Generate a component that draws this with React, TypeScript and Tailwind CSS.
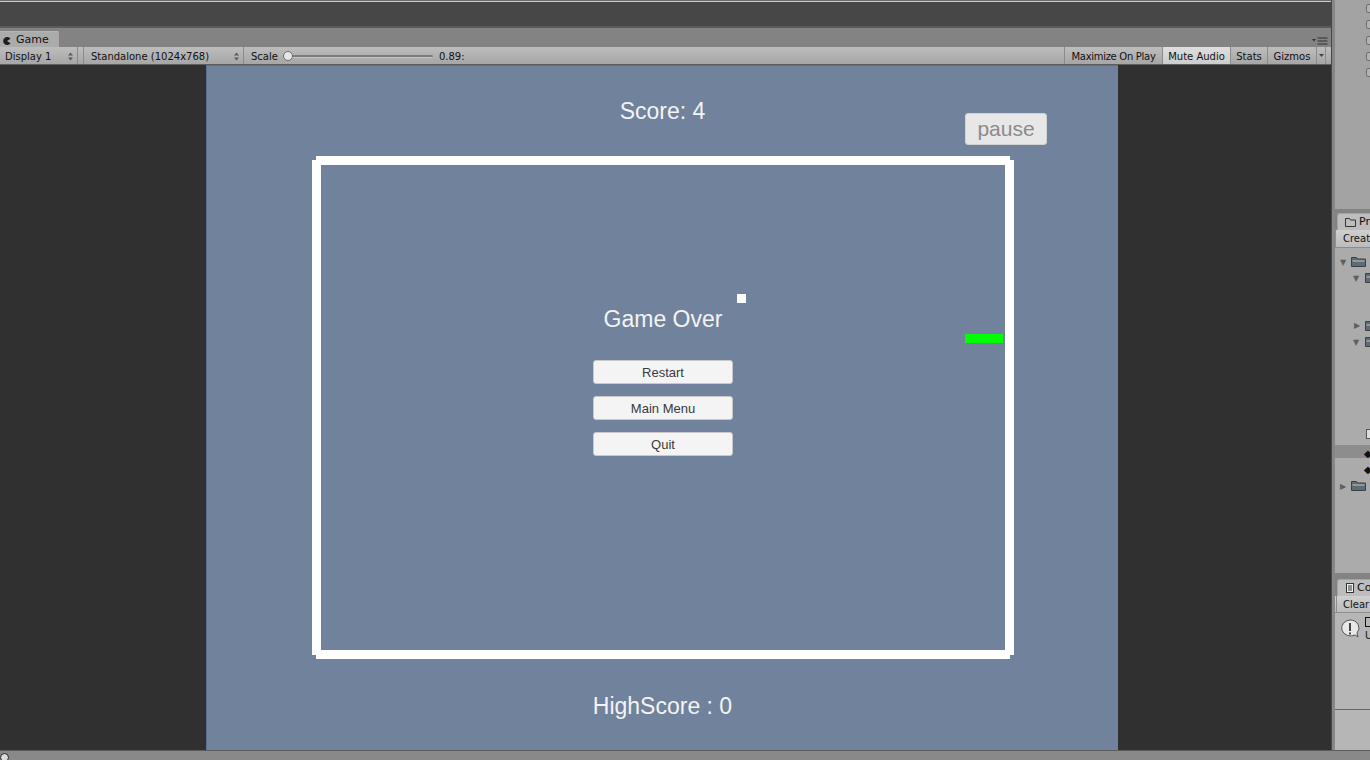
import React from 'react';

const UpDown: React.FC = () => (
  <svg width="5" height="9" viewBox="0 0 5 9" className="shrink-0">
    <path d="M0 3.5 L2.5 0.5 L5 3.5 Z M0 5.5 L2.5 8.5 L5 5.5 Z" fill="#5a5a5a" />
  </svg>
);

const Folder: React.FC<{ className?: string }> = ({ className }) => (
  <svg width="15" height="11" viewBox="0 0 15 11" className={className}>
    <path d="M0.5 1.5 h5 l1.5 1.5 h7.5 v7.5 h-14 Z" fill="#5f6b70" stroke="#3a4246" />
    <rect x="1.5" y="4" width="12" height="2" fill="#8c999e" />
  </svg>
);

const MenuButton: React.FC<{ label: string }> = ({ label }) => (
  <button className="w-[140px] h-[24px] bg-[#f4f4f4] border border-[#c9c9c9] rounded-[3px] text-[13px] leading-none text-[#3a3a3a] font-['Liberation_Sans',sans-serif]">
    {label}
  </button>
);

const ToolbarItem: React.FC<{ width: string; children: React.ReactNode; active?: boolean }> = ({ width, children, active }) => (
  <div
    className={`${width} h-full flex items-center justify-center whitespace-nowrap border-l border-[#8b8b8b] pt-[1px] ${
      active ? 'bg-gradient-to-b from-[#dedede] to-[#cdcdcd]' : ''
    }`}
  >
    {children}
  </div>
);

const GameView: React.FC = () => (
  <div className="relative w-[912px] h-full ml-[206px] bg-[#71829d] border-t border-l border-[#5c6f90] flex flex-col font-['Liberation_Sans',sans-serif] text-[#f3f3f3]">
    <div className="mt-[32px] text-center text-[23px] leading-[26px]">Score: 4</div>

    <button className="absolute left-[758px] top-[47px] w-[82px] h-[32px] bg-[#e7e7e7] border border-[#d2d2d2] rounded-[3px] text-[21px] leading-none text-[#8b8b8b] pb-[2px]">
      pause
    </button>

    <div className="relative mt-[32px] ml-[105px] w-[702px] h-[503px]">
      {/* walls */}
      <div className="absolute inset-y-0 left-[4px] right-[4px] border-y-[9px] border-white" />
      <div className="absolute inset-x-0 top-[4px] bottom-[4px] border-x-[9px] border-white" />

      {/* food and snake */}
      <div className="absolute left-[425px] top-[138px] w-[9px] h-[9px] bg-white" />
      <div className="absolute left-[653px] top-[178px] w-[38px] h-[9px] bg-[#00ff00]" />

      <div className="relative flex flex-col items-center pt-[150px]">
        <div className="text-[23px] leading-[26px]">Game Over</div>
        <div className="mt-[28px] flex flex-col gap-[12px]">
          <MenuButton label="Restart" />
          <MenuButton label="Main Menu" />
          <MenuButton label="Quit" />
        </div>
      </div>
    </div>

    <div className="mt-[34px] text-center text-[23px] leading-[26px]">HighScore : 0</div>
  </div>
);

const RightPanel: React.FC = () => (
  <div className="flex-1 flex flex-col text-[10px] text-[#111] overflow-hidden">
    {/* inspector (cut off) */}
    <div className="h-[209px] bg-[#a3a3a3] relative">
      {[4, 20, 36, 52, 68].map(y => (
        <div
          key={y}
          className="absolute left-[31px] w-[10px] h-[9px] border border-[#6e6e6e] rounded-[2px] bg-[#b2b2b2]"
          style={{ top: y }}
        />
      ))}
    </div>

    {/* project */}
    <div className="h-[21px] bg-[#838383] flex items-end pl-[2px]">
      <div className="h-[17px] flex-1 bg-[#bdbdbd] rounded-tl-[3px] border-t border-l border-[#9aa6b8] flex items-center gap-[3px] pl-[7px] whitespace-nowrap">
        <svg width="11" height="9" viewBox="0 0 11 9" className="shrink-0">
          <path d="M0.5 0.5 h4 l1 1.5 h5 v6.5 h-10 Z" fill="none" stroke="#333" />
        </svg>
        <span className="text-[11px]">Project</span>
      </div>
    </div>
    <div className="h-[18px] bg-gradient-to-b from-[#cfcfcf] to-[#bcbcbc] border-b border-[#8d8d8d] flex items-center whitespace-nowrap">
      <div className="h-full border-r border-[#8d8d8d] w-[4px]" />
      <span className="pl-[7px]">Create</span>
    </div>
    <div className="h-[325px] bg-[#ababab] relative">
      <span className="absolute left-[5px] top-[9px] text-[#606060] text-[8px]">▼</span>
      <Folder className="absolute left-[16px] top-[8px]" />
      <span className="absolute left-[18px] top-[25px] text-[#606060] text-[8px]">▼</span>
      <Folder className="absolute left-[30px] top-[24px]" />
      <span className="absolute left-[19px] top-[72px] text-[#606060] text-[8px]">▶</span>
      <Folder className="absolute left-[30px] top-[72px]" />
      <span className="absolute left-[18px] top-[89px] text-[#606060] text-[8px]">▼</span>
      <Folder className="absolute left-[30px] top-[88px]" />
      <div className="absolute left-[31px] top-[181px] w-[8px] h-[10px] border border-[#555] bg-[#ddd]" />
      <div className="absolute left-0 right-0 top-[197px] h-[13px] bg-[#8d8d8d]" />
      <span className="absolute left-[29px] top-[198px] text-[10px] text-[#111]">◆</span>
      <span className="absolute left-[29px] top-[214px] text-[10px] text-[#111]">◆</span>
      <span className="absolute left-[5px] top-[233px] text-[#606060] text-[8px]">▶</span>
      <Folder className="absolute left-[16px] top-[232px]" />
    </div>

    {/* console */}
    <div className="h-[23px] bg-[#838383] flex items-end pl-[2px]">
      <div className="h-[17px] flex-1 bg-[#bdbdbd] rounded-tl-[3px] border-t border-l border-[#9aa6b8] flex items-center gap-[3px] pl-[8px] whitespace-nowrap">
        <svg width="8" height="10" viewBox="0 0 8 10" className="shrink-0">
          <rect x="0.5" y="0.5" width="7" height="9" fill="#eee" stroke="#333" />
          <path d="M2 3 h4 M2 5 h4 M2 7 h4" stroke="#333" />
        </svg>
        <span className="text-[11px]">Console</span>
      </div>
    </div>
    <div className="h-[17px] bg-gradient-to-b from-[#cfcfcf] to-[#bcbcbc] border-b border-[#8d8d8d] flex items-center whitespace-nowrap">
      <div className="h-full border-r border-[#8d8d8d] w-[2px]" />
      <span className="pl-[6px]">Clear</span>
    </div>
    <div className="flex-1 bg-[#b6b6b6] relative">
      <svg width="22" height="22" viewBox="0 0 22 22" className="absolute left-[4px] top-[5px]">
        <path d="M11 2 a9 8 0 1 0 5 15 l3 2 l-1 -4 a9 8 0 0 0 -7 -13 Z" fill="#e8e8e8" stroke="#555" />
        <rect x="10" y="5" width="2" height="8" fill="#444" />
        <rect x="10" y="14.5" width="2" height="2" fill="#444" />
      </svg>
      <div className="absolute left-[30px] top-[4px] w-[8px] h-[10px] border border-[#111]" />
      <span className="absolute left-[30px] top-[15px] text-[10px]">Unity</span>
      <div className="absolute left-0 right-0 top-[96px] h-[1px] bg-[#666]" />
    </div>
  </div>
);

const App: React.FC = () => {
  return (
    <div className="w-[1370px] h-[760px] flex flex-col overflow-hidden bg-[#303030] font-['DejaVu_Sans',sans-serif]">
      <div className="flex flex-1 min-h-0">
        <div className="w-[1331px] flex flex-col">
          {/* top dark strip */}
          <div className="h-[1px] bg-[#6a6a6a]" />
          <div className="h-[1px] bg-[#c9c9c9]" />
          <div className="h-[24px] bg-[#474747]" />
          <div className="h-[2px] bg-[#5b5b5b]" />

          {/* tab bar */}
          <div className="h-[19px] bg-[#838383] flex items-end relative">
            <div className="h-[16px] w-[59px] bg-[#ababab] border-t border-[#a9b7cd] rounded-tr-[2px] flex items-center gap-[5px] pl-[3px] pt-[2px] text-[11px] text-[#111]">
              <svg width="8" height="8" viewBox="0 0 8 8">
                <path d="M7.5 1.8 A4 4 0 1 0 7.5 6.2 L4 4 Z" fill="#1e1e1e" />
              </svg>
              <span>Game</span>
            </div>
            <svg width="16" height="8" viewBox="0 0 16 8" className="absolute right-[3px] top-[9px]">
              <path d="M0 2 L4 2 L2 4.5 Z" fill="#333" />
              <path d="M5.5 1 H15.5 M5.5 4 H15.5 M5.5 7 H15.5" stroke="#333" strokeWidth="1.2" />
            </svg>
          </div>

          {/* toolbar */}
          <div className="h-[18px] bg-gradient-to-b from-[#bdbdbd] to-[#a6a6a6] flex items-center text-[10px] text-[#111] border-b border-[#5e5e5e]">
            <div className="w-[78px] h-full flex items-center justify-between pl-[5px] pr-[4px] pt-[1px] border-r border-[#8b8b8b]">
              <span>Display 1</span>
              <UpDown />
            </div>
            <div className="w-[6px] h-full border-r border-[#8b8b8b]" />
            <div className="w-[160px] h-full flex items-center justify-between pl-[7px] pr-[4px] pt-[1px] border-r border-[#8b8b8b]">
              <span>Standalone (1024x768)</span>
              <UpDown />
            </div>
            <div className="flex items-center h-full pl-[7px] pt-[1px]">
              <span>Scale</span>
              <div className="relative ml-[5px] w-[152px] h-[10px] flex items-center">
                <div className="ml-[4px] w-[146px] h-[3px] rounded-full bg-[#7b7b7b] border-b border-[#c5c5c5]" />
                <div className="absolute left-0 top-[0px] w-[10px] h-[10px] rounded-full bg-[#e6e6e6] border border-[#6b6b6b]" />
              </div>
              <span className="ml-[4px]">0.89:</span>
            </div>
            <div className="flex-1" />
            <ToolbarItem width="w-[98px]">
              <span className="tracking-[-0.3px]">Maximize On Play</span>
            </ToolbarItem>
            <ToolbarItem width="w-[68px]" active>
              Mute Audio
            </ToolbarItem>
            <ToolbarItem width="w-[37px]">Stats</ToolbarItem>
            <ToolbarItem width="w-[49px]">Gizmos</ToolbarItem>
            <div className="w-[10px] h-full border-x border-[#8b8b8b] flex items-center justify-center">
              <svg width="5" height="3" viewBox="0 0 5 3">
                <path d="M0 0 L5 0 L2.5 3 Z" fill="#444" />
              </svg>
            </div>
            <div className="w-[5px]" />
          </div>

          {/* game view */}
          <div className="flex-1 min-h-0 bg-[#303030] flex">
            <GameView />
          </div>
        </div>

        <div className="w-[4px] bg-[#868686] border-l border-[#474747]" />
        <RightPanel />
      </div>

      {/* status bar */}
      <div className="h-[10px] bg-[#898989] border-t border-[#5d5d5d] relative overflow-hidden">
        <div className="absolute left-[0px] top-[2px] w-[9px] h-[9px] rounded-full border border-[#222] bg-[#ddd]" />
      </div>
    </div>
  );
};

export default App;
